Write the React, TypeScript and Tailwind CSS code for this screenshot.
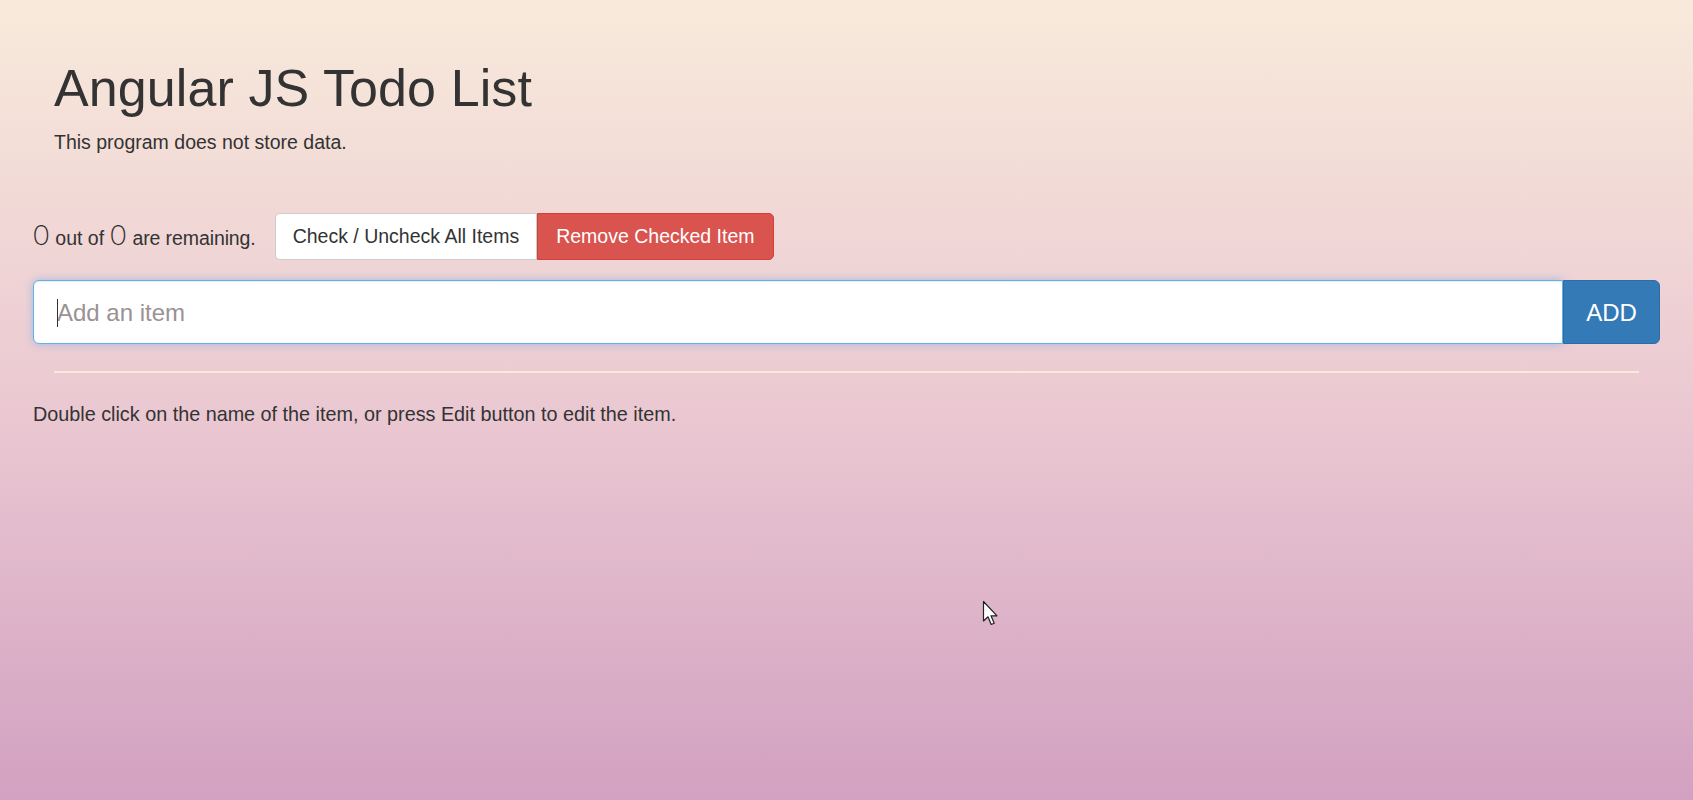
import React, { useState } from 'react';

const App = () => {
  const [text, setText] = useState('');
  const items: { name: string; done: boolean }[] = [];
  const remaining = items.filter((i) => !i.done).length;

  return (
    <div
      className="relative min-h-screen bg-linear-to-b from-[#f8eadb] via-[#ebc9d2] to-[#d2a1c1] px-[33px] text-[#333] text-[19.5px] leading-[27px]"
      style={{ fontFamily: '"Liberation Sans", Arial, sans-serif' }}
    >
      {/* header */}
      <div className="pl-[21px] pt-[60px]">
        <h1 className="text-[52px] leading-[57px] font-normal tracking-[0.1px]">Angular JS Todo List</h1>
        <p className="mt-[12px]">This program does not store data.</p>
      </div>

      {/* counter + actions */}
      <div className="mt-[57px] flex items-center">
        <span className="flex items-baseline">
          <span className="text-[27px] font-extralight mr-[6px] scale-x-110" style={{ fontFamily: 'Inter, sans-serif' }}>
            {remaining}
          </span>
          <span>out of</span>
          <span className="text-[27px] font-extralight mx-[6px] scale-x-110" style={{ fontFamily: 'Inter, sans-serif' }}>
            {items.length}
          </span>
          <span className="tracking-[-0.1px]">are remaining.</span>
        </span>
        <div className="ml-[19px] flex">
          <button className="h-[47px] px-[17px] bg-white border border-[#ccc] rounded-l-[5px] text-[#333]">
            Check / Uncheck All Items
          </button>
          <button className="h-[47px] px-[18px] bg-[#d9534f] border border-[#d43f3a] rounded-r-[5px] text-white">
            Remove Checked Item
          </button>
        </div>
      </div>

      {/* add form */}
      <div className="relative mt-[20px] flex h-[64px]">
        <input
          autoFocus
          value={text}
          onChange={(e) => setText(e.target.value)}
          placeholder="Add an item"
          className="flex-1 min-w-0 bg-white border border-[#66afe9] rounded-l-[6px] px-[23px] text-[24px] text-[#555] placeholder:text-[#9b9194] outline-none shadow-[inset_0_1px_1px_rgba(0,0,0,0.075),0_0_8px_rgba(102,175,233,0.6)] caret-[#333]"
        />
        {/* blinking caret as captured */}
        <span className="absolute left-[24px] top-[19px] h-[28px] w-px bg-[#333]" />
        <button className="w-[97px] bg-[#337ab7] border border-[#2e6da4] rounded-r-[6px] text-white text-[24px]">
          ADD
        </button>
      </div>

      <hr className="mt-[27px] mx-[21px] border-0 border-t-[2px] border-[#f6ead9]" />

      <p className="mt-[28px] text-[19.8px]">Double click on the name of the item, or press Edit button to edit the item.</p>

      {/* mouse pointer */}
      <svg className="absolute left-[982px] top-[600px]" width="17" height="27" viewBox="0 0 17 27">
        <path
          d="M1.5 1.5 L1.5 21 L6 16.8 L9.2 24.5 L12.2 23.2 L9 15.8 L15 15.8 Z"
          fill="#fff"
          stroke="#222"
          strokeWidth="1.2"
          strokeLinejoin="round"
        />
      </svg>
    </div>
  );
};

export default App;
